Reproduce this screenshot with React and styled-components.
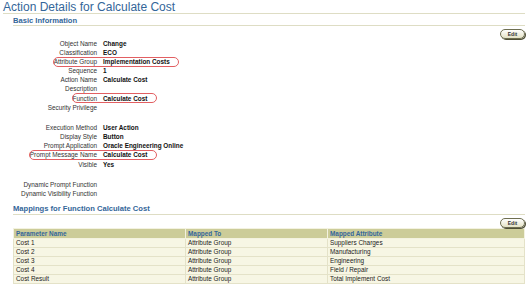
import React from 'react'
import styled, { createGlobalStyle } from 'styled-components'

const GlobalStyle = createGlobalStyle`
  body {
    margin: 0;
    background: #fff;
    font-family: "Liberation Sans", Arial, sans-serif;
  }
`

const details = [
  { label: 'Object Name', value: 'Change' },
  { label: 'Classification', value: 'ECO' },
  { label: 'Attribute Group', value: 'Implementation Costs', ring: [50, 126] },
  { label: 'Sequence', value: '1' },
  { label: 'Action Name', value: 'Calculate Cost' },
  { label: 'Description', value: '' },
  { label: 'Function', value: 'Calculate Cost', ring: [69, 85] },
  { label: 'Security Privilege', value: '' },
  { label: 'Execution Method', value: 'User Action', gap: true },
  { label: 'Display Style', value: 'Button' },
  { label: 'Prompt Application', value: 'Oracle Engineering Online' },
  { label: 'Prompt Message Name', value: 'Calculate Cost', ring: [26, 128] },
  { label: 'Visible', value: 'Yes' },
  { label: 'Dynamic Prompt Function', value: '', gap: true },
  { label: 'Dynamic Visibility Function', value: '' },
]

const mappings = [
  ['Cost 1', 'Attribute Group', 'Suppliers Charges'],
  ['Cost 2', 'Attribute Group', 'Manufacturing'],
  ['Cost 3', 'Attribute Group', 'Engineering'],
  ['Cost 4', 'Attribute Group', 'Field / Repair'],
  ['Cost Result', 'Attribute Group', 'Total Implement Cost'],
]

const App = () => {
  return (
    <Page>
      <GlobalStyle />
      <Title>Action Details for Calculate Cost</Title>
      <Section>
        <Header>Basic Information</Header>
        <ButtonBar>
          <EditButton>Edit</EditButton>
        </ButtonBar>
        <Details>
          {details.map((d) => (
            <Row key={d.label} gap={d.gap}>
              <Label>{d.label}</Label>
              <Value>{d.value}</Value>
              {d.ring && <Ring style={{ left: d.ring[0], width: d.ring[1] }} />}
            </Row>
          ))}
        </Details>
        <Header spaced>Mappings for Function Calculate Cost</Header>
        <ButtonBar>
          <EditButton>Edit</EditButton>
        </ButtonBar>
        <Table>
          <colgroup>
            <col style={{ width: 172 }} />
            <col style={{ width: 142 }} />
            <col />
          </colgroup>
          <thead>
            <tr>
              <Th>Parameter Name</Th>
              <Th>Mapped To</Th>
              <Th>Mapped Attribute</Th>
            </tr>
          </thead>
          <tbody>
            {mappings.map((m) => (
              <tr key={m[0]}>
                {m.map((c, i) => (
                  <Td key={i}>{c}</Td>
                ))}
              </tr>
            ))}
          </tbody>
        </Table>
      </Section>
    </Page>
  )
}

export default App

const Page = styled.div`
  width: 522px;
  padding: 0 5px 0 3px;
`

const Title = styled.div`
  padding-top: 1px;
  font-size: 12px;
  line-height: 12px;
  color: #336699;
  border-bottom: 1px solid #deddc4;
`

const Section = styled.div`
  margin-left: 10px;
`

const Header = styled.div`
  margin-top: ${(p) => (p.spaced ? '6px' : '2px')};
  padding-bottom: ${(p) => (p.spaced ? '1px' : '0')};
  font-size: 7.6px;
  line-height: 9px;
  font-weight: bold;
  color: #336699;
  border-bottom: 1px solid #deddc4;
`

const ButtonBar = styled.div`
  display: flex;
  justify-content: flex-end;
  padding-top: 3px;
`

const EditButton = styled.div`
  box-sizing: border-box;
  width: 25px;
  height: 10px;
  border: 1px solid #6e6e50;
  border-radius: 5px;
  background: linear-gradient(#ffffff, #e4e2c6);
  box-shadow: 1px 1px 0 #4e4e36;
  font-size: 5px;
  line-height: 8px;
  font-weight: bold;
  text-align: center;
  color: #333;
`

const Details = styled.div`
  margin-left: -10px;
`

const Row = styled.div`
  position: relative;
  display: flex;
  height: 9.1px;
  margin-top: ${(p) => (p.gap ? '11.4px' : '0')};
  font-size: 6.4px;
  line-height: 9.1px;
  color: #222;
`

const Label = styled.div`
  flex: 0 0 94px;
  text-align: right;
  color: #333;
`

const Value = styled.div`
  margin-left: 6px;
  font-weight: bold;
  color: #111;
`

const Ring = styled.div`
  position: absolute;
  top: -0.5px;
  height: 10px;
  box-sizing: border-box;
  border: 1px solid #e25f62;
  border-radius: 5px;
`

const Table = styled.table`
  width: 512px;
  margin-top: 0;
  border-collapse: collapse;
  table-layout: fixed;
  font-size: 6.4px;
`

const Th = styled.th`
  height: 9px;
  padding: 0 2px;
  background: #cccc99;
  color: #336699;
  font-weight: bold;
  text-align: left;
  line-height: 8px;
  border: 1px solid #f3f2e0;
`

const Td = styled.td`
  height: 8px;
  padding: 0 2px;
  background: #f7f6e4;
  color: #222;
  line-height: 8px;
  border: 1px solid #e4e2c8;
`
